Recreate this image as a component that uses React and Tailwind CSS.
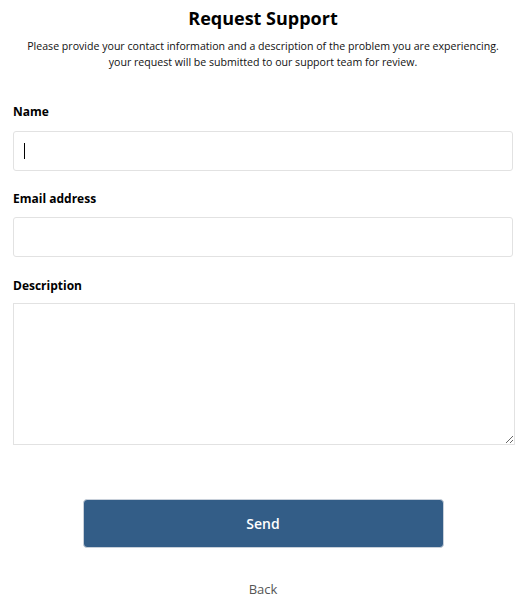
export default function App() {
  const font = { fontFamily: '"Open Sans", "Noto Sans", sans-serif' };
  return (
    <div className="w-[526px] h-[606px] bg-white text-black overflow-hidden" style={font}>
      <div className="px-[13px] pt-[6px]">
        <h1 className="text-center text-[18px] leading-[24px] font-bold">Request Support</h1>
        <p className="mt-[8px] text-center text-[10.6px] leading-[16px] text-[#111]">
          Please provide your contact information and a description of the problem you are experiencing.
          <br />
          your request will be submitted to our support team for review.
        </p>

        <label className="block mt-[33px] text-[12px] leading-[18px] font-bold">Name</label>
        <div className="relative mt-[10px]">
          <input className="block w-[500px] h-[40px] border border-[#e2e2e2] rounded-[3px] outline-none px-[10px] text-[13px]" />
          <div className="absolute left-[11px] top-[12px] w-[1px] h-[16px] bg-black" />
        </div>

        <label className="block mt-[19px] text-[12px] leading-[18px] font-bold">Email address</label>
        <input className="block mt-[9px] w-[500px] h-[40px] border border-[#e2e2e2] rounded-[3px] outline-none px-[10px] text-[13px]" />

        <label className="block mt-[20px] text-[12px] leading-[18px] font-bold">Description</label>
        <textarea className="block mt-[8px] w-[502px] h-[142px] border border-[#e2e2e2] outline-none p-[10px] text-[13px]" />

        <div className="flex justify-center mt-[54px]">
          <button className="w-[361px] h-[49px] rounded-[4px] bg-[#335d87] border border-[#c8d0da] text-white text-[14px] font-semibold">
            Send
          </button>
        </div>

        <div className="mt-[32px] text-center text-[13px] leading-[18px] text-[#555]">Back</div>
      </div>
    </div>
  );
}
